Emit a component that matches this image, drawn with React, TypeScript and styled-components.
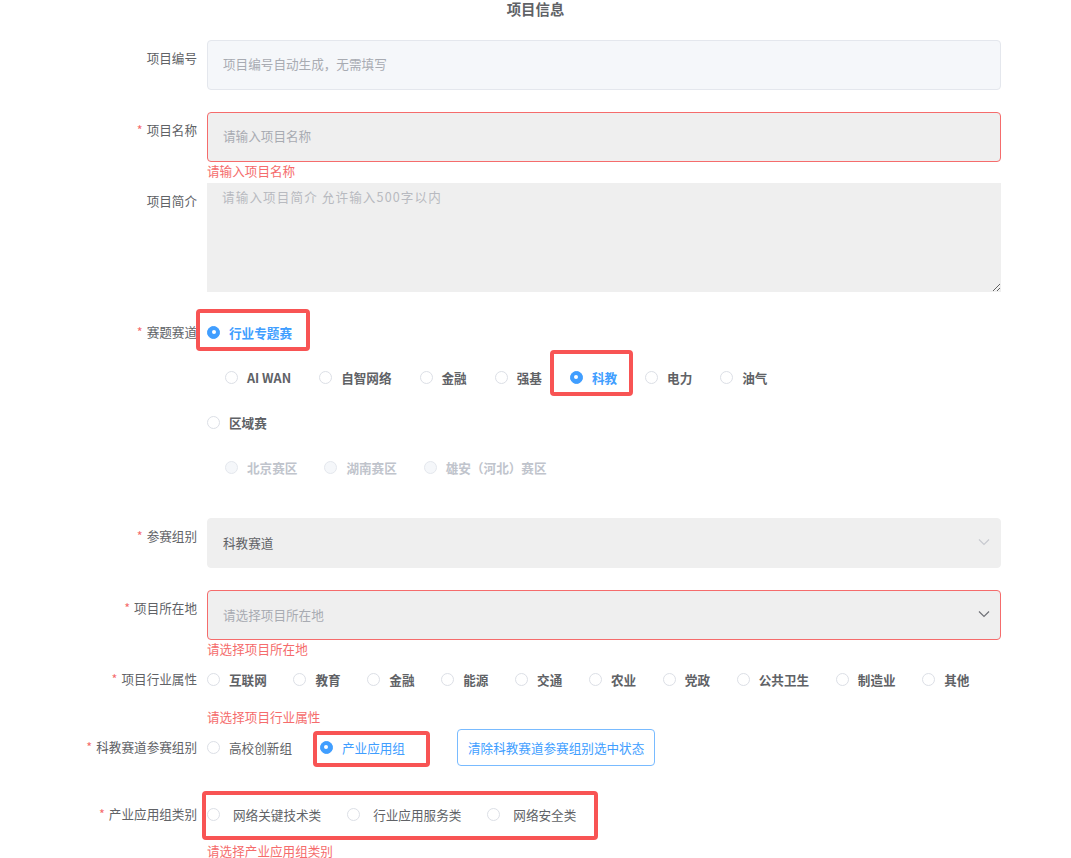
import React from "react";
import styled, { createGlobalStyle } from "styled-components";

const GlobalStyle = createGlobalStyle`
	body {
		margin: 0;
		background: #fff;
		font-family: "Noto Sans CJK SC", "Noto Sans", sans-serif;
		color: #606266;
	}
`;

type Opt = { label: string; checked?: boolean; disabled?: boolean };

const TRACKS: Opt[] = [
	{ label: "AI WAN" },
	{ label: "自智网络" },
	{ label: "金融" },
	{ label: "强基" },
	{ label: "科教", checked: true },
	{ label: "电力" },
	{ label: "油气" },
];

const REGIONS: Opt[] = [
	{ label: "北京赛区", disabled: true },
	{ label: "湖南赛区", disabled: true },
	{ label: "雄安（河北）赛区", disabled: true },
];

const INDUSTRIES = [
	"互联网",
	"教育",
	"金融",
	"能源",
	"交通",
	"农业",
	"党政",
	"公共卫生",
	"制造业",
	"其他",
];

const CATEGORIES = ["网络关键技术类", "行业应用服务类", "网络安全类"];

const Chevron = ({ color }: { color: string }) => (
	<svg width="12" height="8" viewBox="0 0 12 8" fill="none">
		<path d="M1 1.5 L6 6.5 L11 1.5" stroke={color} strokeWidth="1.2" />
	</svg>
);

const Radio: React.FC<{
	opt: Opt;
	bold?: boolean;
	gap?: number;
	space?: number;
}> = ({ opt, bold = true, gap = 9, space = 26 }) => (
	<RadioLabel
		$checked={!!opt.checked}
		$disabled={!!opt.disabled}
		$bold={bold}
		$gap={gap}
		$space={space}
	>
		<Circle $checked={!!opt.checked} $disabled={!!opt.disabled} />
		{opt.label}
	</RadioLabel>
);

export default function App() {
	return (
		<Page>
			<GlobalStyle />
			<Title>项目信息</Title>
			<Form>
				<FormItem $mb={22}>
					<Label>项目编号</Label>
					<Input $tone="disabled" placeholder="项目编号自动生成，无需填写" readOnly />
				</FormItem>

				<FormItem $mb={4}>
					<Label>
						<Star>*</Star>项目名称
					</Label>
					<Input $tone="error" placeholder="请输入项目名称" readOnly />
					<Error>请输入项目名称</Error>
				</FormItem>

				<FormItem $mb={22}>
					<Label>项目简介</Label>
					<TextArea placeholder="请输入项目简介 允许输入500字以内" readOnly />
				</FormItem>

				<FormItem $mb={33}>
					<Label>
						<Star>*</Star>赛题赛道
					</Label>
					<Lines>
						<Line>
							<Marked $inset="-5px -18px -1px -11px">
								<Radio opt={{ label: "行业专题赛", checked: true }} />
							</Marked>
						</Line>
						<Line $indent>
							{TRACKS.map((t) =>
								t.checked ? (
									<Marked key={t.label} $inset="-9px -16px -1px -20px">
										<Radio opt={t} />
									</Marked>
								) : (
									<Radio key={t.label} opt={t} space={28} />
								)
							)}
						</Line>
						<Line>
							<Radio opt={{ label: "区域赛" }} />
						</Line>
						<Line $indent>
							{REGIONS.map((r) => (
								<Radio key={r.label} opt={r} space={27} />
							))}
						</Line>
					</Lines>
				</FormItem>

				<FormItem $mb={22}>
					<Label>
						<Star>*</Star>参赛组别
					</Label>
					<Select $error={false}>
						<SelectValue $placeholder={false}>科教赛道</SelectValue>
						<Chevron color="#c8cad0" />
					</Select>
				</FormItem>

				<FormItem $mb={4}>
					<Label>
						<Star>*</Star>项目所在地
					</Label>
					<Select $error>
						<SelectValue $placeholder>请选择项目所在地</SelectValue>
						<Chevron color="#707278" />
					</Select>
					<Error>请选择项目所在地</Error>
				</FormItem>

				<FormItem $mb={4}>
					<Label>
						<Star>*</Star>项目行业属性
					</Label>
					<Line>
						{INDUSTRIES.map((i) => (
							<Radio key={i} opt={{ label: i }} space={26.7} />
						))}
					</Line>
					<Error $top={12}>请选择项目行业属性</Error>
				</FormItem>

				<FormItem $mb={31}>
					<Label>
						<Star>*</Star>科教赛道参赛组别
					</Label>
					<Line>
						<Radio opt={{ label: "高校创新组" }} bold={false} space={28} />
						<Marked $inset="2px -25px -2px -7px">
							<Radio opt={{ label: "产业应用组", checked: true }} bold={false} />
						</Marked>
						<ClearButton>清除科教赛道参赛组别选中状态</ClearButton>
					</Line>
				</FormItem>

				<FormItem $mb={0}>
					<Label>
						<Star>*</Star>产业应用组类别
					</Label>
					<Line>
						<Marked $inset="-5px -22px -8px -5px">
							{CATEGORIES.map((c) => (
								<Radio key={c} opt={{ label: c }} bold={false} gap={13} />
							))}
						</Marked>
					</Line>
					<Error $top={11}>请选择产业应用组类别</Error>
				</FormItem>
			</Form>
		</Page>
	);
}

const Page = styled.div`
	width: 1071px;
	font-size: 12.6px;
`;

const Title = styled.h2`
	margin: 0;
	height: 18px;
	line-height: 18px;
	text-align: center;
	font-size: 14.4px;
	font-weight: 700;
	color: #606266;
`;

const Form = styled.div`
	margin-top: 22px;
	width: 1001px;
`;

const FormItem = styled.div<{ $mb: number }>`
	display: grid;
	grid-template-columns: 207px 794px;
	margin-bottom: ${(p) => p.$mb}px;
`;

const Label = styled.label`
	grid-column: 1;
	box-sizing: border-box;
	padding-right: 10px;
	text-align: right;
	line-height: 36px;
	font-size: 12.6px;
	color: #606266;
	white-space: nowrap;
`;

const Star = styled.span`
	color: #f56c6c;
	margin-right: 4px;
`;

const Error = styled.div<{ $top?: number }>`
	grid-column: 2;
	margin-top: ${(p) => p.$top ?? 1}px;
	line-height: 16px;
	font-size: 12.6px;
	color: #f56c6c;
`;

const Input = styled.input<{ $tone: "disabled" | "error" }>`
	box-sizing: border-box;
	width: 794px;
	height: 50px;
	padding: 0 15px 3px;
	border-radius: 4px;
	font-family: inherit;
	font-size: 12.6px;
	outline: none;
	border: 1px solid ${(p) => (p.$tone === "error" ? "#f56c6c" : "#e4e7ed")};
	background: ${(p) => (p.$tone === "error" ? "#efefef" : "#f5f7fa")};
	&::placeholder {
		color: #a8abb2;
	}
`;

const TextArea = styled.textarea`
	box-sizing: border-box;
	width: 794px;
	height: 109px;
	padding: 5px 15px;
	border: none;
	border-radius: 0;
	background: #efefef;
	font-family: inherit;
	font-size: 12.6px;
	line-height: 1.5;
	letter-spacing: 1.1px;
	outline: none;
	resize: vertical;
	&::placeholder {
		color: #b8bac0;
	}
`;

const Select = styled.div<{ $error: boolean }>`
	box-sizing: border-box;
	width: 794px;
	height: 50px;
	display: flex;
	align-items: center;
	justify-content: space-between;
	padding: 0 10px 2px 15px;
	border-radius: 4px;
	background: #efefef;
	border: 1px solid ${(p) => (p.$error ? "#f56c6c" : "#efefef")};
`;

const SelectValue = styled.span<{ $placeholder: boolean }>`
	font-size: 12.6px;
	color: ${(p) => (p.$placeholder ? "#a8abb2" : "#606266")};
`;

const Lines = styled.div`
	display: flex;
	flex-direction: column;
	gap: 9px;
`;

const Line = styled.div<{ $indent?: boolean }>`
	display: flex;
	align-items: stretch;
	height: 36px;
	padding-left: ${(p) => (p.$indent ? 18 : 0)}px;
`;

const Marked = styled.span<{ $inset: string }>`
	position: relative;
	display: flex;
	align-items: stretch;
	margin-right: 28px;
	&::after {
		content: "";
		position: absolute;
		inset: ${(p) => p.$inset};
		border: 4px solid #f85454;
		border-radius: 4px;
		pointer-events: none;
	}
	& > label:last-of-type {
		margin-right: 0;
	}
`;

const RadioLabel = styled.label<{
	$checked: boolean;
	$disabled: boolean;
	$bold: boolean;
	$gap: number;
	$space: number;
}>`
	display: flex;
	align-items: center;
	gap: ${(p) => p.$gap}px;
	margin-right: ${(p) => p.$space}px;
	font-size: 12.6px;
	font-weight: ${(p) => (p.$bold ? 600 : 400)};
	white-space: nowrap;
	color: ${(p) =>
		p.$disabled ? "#c0c4cc" : p.$checked ? "#409eff" : "#606266"};
`;

const Circle = styled.span<{ $checked: boolean; $disabled: boolean }>`
	box-sizing: border-box;
	width: 13px;
	height: 13px;
	border-radius: 50%;
	display: inline-flex;
	align-items: center;
	justify-content: center;
	border: 1px solid
		${(p) =>
			p.$checked ? "#409eff" : p.$disabled ? "#e4e7ed" : "#dcdfe6"};
	background: ${(p) =>
		p.$checked ? "#409eff" : p.$disabled ? "#f5f7fa" : "#fff"};
	&::after {
		content: "";
		width: 4px;
		height: 4px;
		border-radius: 50%;
		background: #fff;
		display: ${(p) => (p.$checked ? "block" : "none")};
	}
`;

const ClearButton = styled.button`
	box-sizing: border-box;
	height: 37px;
	padding: 0 10px;
	margin-left: 24px;
	border: 1px solid #79bbff;
	border-radius: 4px;
	background: #fff;
	color: #409eff;
	font-family: inherit;
	font-size: 12.6px;
	cursor: pointer;
`;
